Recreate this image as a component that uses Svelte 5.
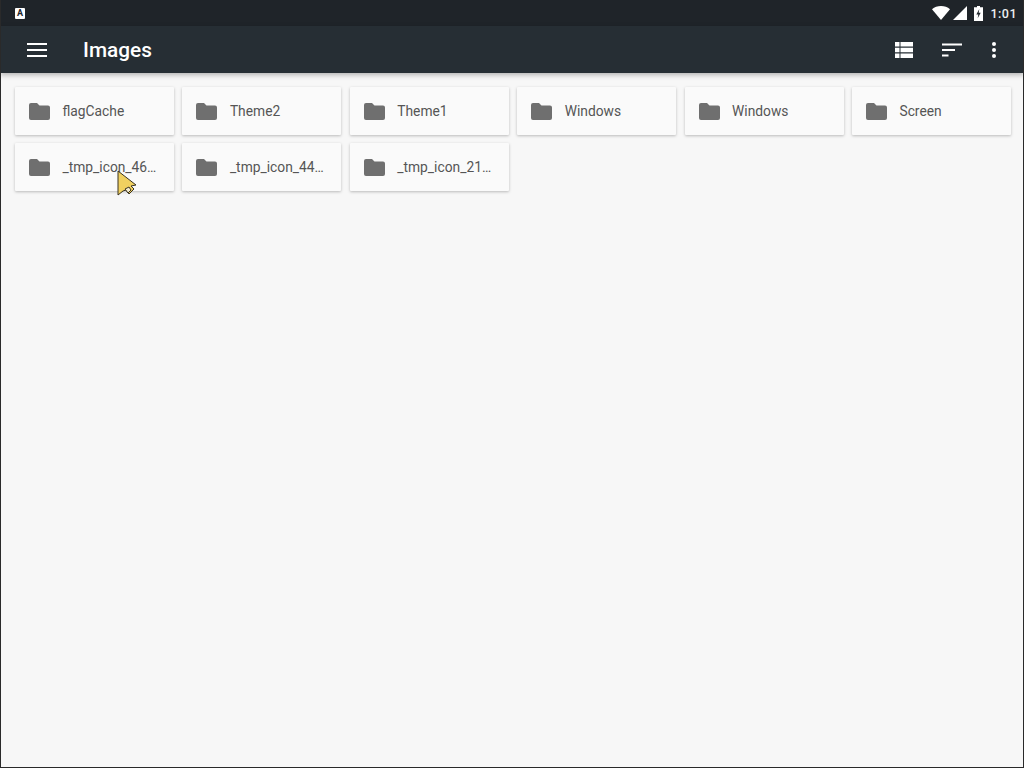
<script>
  const folders = [
    'flagCache', 'Theme2', 'Theme1', 'Windows', 'Windows', 'Screen',
    '_tmp_icon_46…', '_tmp_icon_44…', '_tmp_icon_21…'
  ]
</script>

<div class="screen">
  <div class="status">
    <span class="notif">A</span>
    <div class="status-right">
      <svg width="18" height="14" viewBox="0 0 18 14"><path d="M0 3.200C2.500 1 5.500 0 9 0s6.500 1 9 3.200L9 14z" fill="#fff"/></svg>
      <svg class="signal" width="14" height="14" viewBox="0 0 14 14"><path d="M0 14L14 0v14z" fill="#fff"/></svg>
      <svg class="battery" width="9" height="15" viewBox="0 0 9 15"><path d="M3 0h3v1.300h3V15H0V1.300h3z" fill="#fff"/><path d="M5.300 3L2.300 8.500h2l-.6 3.800 3-5.500h-2z" fill="#23292e"/></svg>
      <span class="clock">1:01</span>
    </div>
  </div>

  <header class="toolbar">
    <button class="menu" aria-label="Menu">
      <svg width="22" height="16" viewBox="0 0 22 16"><path d="M1 2h20M1 8h20M1 14h20" stroke="#fff" stroke-width="2"/></svg>
    </button>
    <h1>Images</h1>
    <div class="actions">
      <svg width="18" height="16" viewBox="0 0 18 16"><path d="M0 0h4.500v4.500H0zM5.500 0H18v4.500H5.500zM0 5.700h4.500v4.600H0zM5.500 5.700H18v4.600H5.500zM0 11.500h4.500V16H0zM5.500 11.500H18V16H5.500z" fill="#fff"/></svg>
      <svg width="20" height="14" viewBox="0 0 20 14"><path d="M0 1.500h20M0 7h13M0 12.500h6.500" stroke="#fff" stroke-width="2"/></svg>
      <svg class="more" width="4" height="16" viewBox="0 0 4 16"><circle cx="2" cy="2" r="2" fill="#fff"/><circle cx="2" cy="8" r="2" fill="#fff"/><circle cx="2" cy="14" r="2" fill="#fff"/></svg>
    </div>
  </header>

  <main class="grid">
    {#each folders as name}
      <div class="card">
        <svg class="folder" width="21" height="17" viewBox="0 0 21 17"><path d="M2 0h6l2.500 2.500H19a2 2 0 0 1 2 2V15a2 2 0 0 1-2 2H2a2 2 0 0 1-2-2V2a2 2 0 0 1 2-2z" fill="#6f6f6f"/></svg>
        <span class="name">{name}</span>
      </div>
    {/each}
    <svg class="cursor" width="20" height="28" viewBox="0 0 20 28">
      <path d="M1 1v24l5-4 3-1 3 4 5-5-3-3 5-1z" fill="#f0d060" stroke="#3a3320" stroke-width="1"/>
      <path d="M8 19l4-2 2 3-3 3z" fill="#f4ecd0" stroke="#3a3320" stroke-width="1"/>
    </svg>
  </main>
</div>

<style>
  :global(body) {
    margin: 0;
    background: #f7f7f7;
  }
  .screen {
    width: 1024px;
    height: 768px;
    box-sizing: border-box;
    border-left: 1px solid #2a2a2a;
    border-right: 1px solid #2a2a2a;
    border-bottom: 1px solid #2a2a2a;
    background: #f7f7f7;
    font-family: Roboto, "Liberation Sans", sans-serif;
    display: flex;
    flex-direction: column;
    overflow: hidden;
  }
  .status {
    height: 26px;
    flex-shrink: 0;
    background: #1f2429;
    margin-left: -1px;
    margin-right: -1px;
    display: flex;
    align-items: center;
    justify-content: space-between;
    padding: 0 7px 0 15px;
    color: #fff;
  }
  .notif {
    width: 10px;
    height: 11px;
    background: #fff;
    border-radius: 1px;
    color: #20262b;
    font-size: 9px;
    font-weight: 700;
    line-height: 11px;
    text-align: center;
    margin-top: 1px;
  }
  .status-right {
    display: flex;
    align-items: center;
  }
  .signal {
    margin-left: 3px;
  }
  .battery {
    margin-left: 7px;
  }
  .clock {
    margin-left: 7px;
    font-size: 12.5px;
    font-weight: 500;
    letter-spacing: 0.5px;
    color: #eceff1;
  }
  .toolbar {
    height: 47px;
    flex-shrink: 0;
    background: #262e34;
    margin-left: -1px;
    margin-right: -1px;
    display: flex;
    align-items: center;
    color: #fff;
    box-shadow: 0 2px 5px rgba(0, 0, 0, 0.28);
    position: relative;
  }
  .menu {
    margin-left: 26px;
    padding: 0;
    border: 0;
    background: none;
    display: flex;
  }
  h1 {
    margin: 0 0 0 35px;
    font-size: 20.8px;
    font-weight: 500;
  }
  .actions {
    margin-left: auto;
    padding-right: 28px;
    display: flex;
    align-items: center;
    gap: 29px;
  }
  .more {
    margin-left: 1px;
  }
  .grid {
    position: relative;
    display: grid;
    grid-template-columns: repeat(6, 159px);
    grid-auto-rows: 48px;
    column-gap: 8.4px;
    row-gap: 8px;
    padding: 14px 0 0 14px;
  }
  .card {
    background: #fafafa;
    box-shadow: 0 1px 3px rgba(0, 0, 0, 0.25);
    border-radius: 1px;
    display: flex;
    align-items: center;
    padding: 0 14px;
    min-width: 0;
  }
  .folder {
    flex-shrink: 0;
  }
  .name {
    margin-left: 12.500px;
    font-size: 13.8px;
    color: #555;
    white-space: nowrap;
  }
  .cursor {
    position: absolute;
    left: 116px;
    top: 97px;
  }
</style>
